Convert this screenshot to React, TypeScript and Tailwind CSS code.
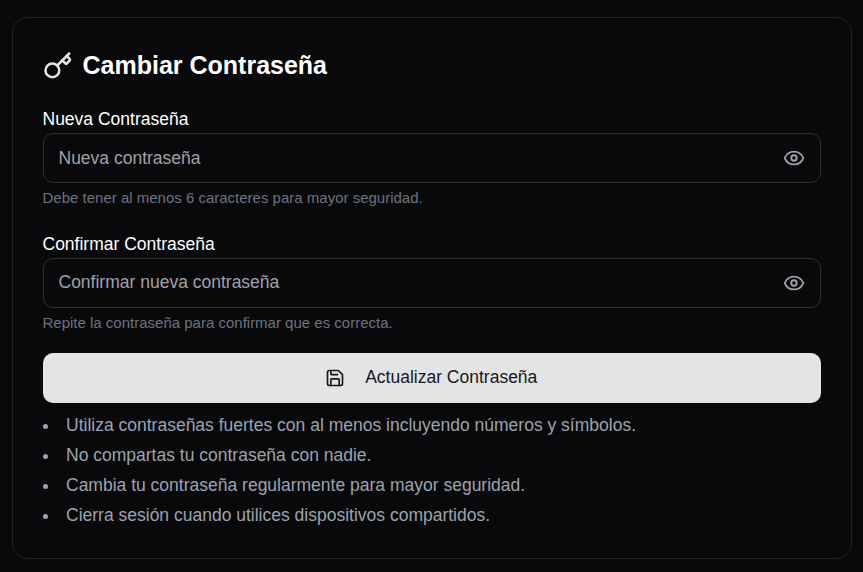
import { useState } from "react";
import { Eye, Key, Save } from "lucide-react";

type FieldProps = { label: string; placeholder: string; hint: string; inputClass?: string };

function Field({ label, placeholder, hint, inputClass = "" }: FieldProps) {
  const [value, setValue] = useState("");
  return (
    <div className="flex flex-col">
      <label className="-ml-[0.5px] h-[23px] text-[17.5px] leading-[19px] text-white">{label}</label>
      <div className="flex h-[50px] items-center rounded-[10px] border border-[#2e2e31] pl-[14.5px] pr-[15px]">
        <input
          className={`min-w-0 flex-1 bg-transparent text-[17.5px] text-white outline-none placeholder:text-[#a1a1aa] ${inputClass}`}
          placeholder={placeholder}
          value={value}
          onChange={(e) => setValue(e.target.value)}
        />
        <Eye size={22} className="text-[#a1a1aa]" />
      </div>
      <p className="-ml-[0.5px] mt-1 h-[22px] text-[15px] leading-[22px] text-[#6b7280]">{hint}</p>
    </div>
  );
}

const tips = [
  "Utiliza contraseñas fuertes con al menos incluyendo números y símbolos.",
  "No compartas tu contraseña con nadie.",
  "Cambia tu contraseña regularmente para mayor seguridad.",
  "Cierra sesión cuando utilices dispositivos compartidos.",
];

export default function App() {
  return (
    <div className="h-[572px] w-[863px] bg-[#09090b] pl-3 pt-[17px] font-['Liberation_Sans',Arial,sans-serif]">
      <div className="h-[542px] w-[840px] rounded-[15px] border border-[#232326] px-[30px] pt-[32px]">
        <h2 className="flex h-[32px] items-center gap-[9.5px] text-[25px] font-bold text-white">
          <Key size={30} className="shrink-0 text-[#e4e4e7]" />
          <span>Cambiar Contraseña</span>
        </h2>
        <div className="mt-[28px] flex flex-col gap-[26px]">
          <Field
            label="Nueva Contraseña"
            placeholder="Nueva contraseña"
            hint="Debe tener al menos 6 caracteres para mayor seguridad."
          />
          <Field
            label="Confirmar Contraseña"
            placeholder="Confirmar nueva contraseña"
            hint="Repite la contraseña para confirmar que es correcta."
            inputClass="pb-0.5"
          />
        </div>
        <button className="mt-[19px] flex h-[50px] w-full items-center justify-center gap-[20px] rounded-[10px] bg-[#e4e4e7] pr-[1.5px] text-[17.5px] text-[#18181b]">
          <Save size={20} />
          <span className="pb-0.5">Actualizar Contraseña</span>
        </button>
        <ul className="mt-[7px] text-[17.5px] leading-[30px] text-[#9ca3af]">
          {tips.map((tip) => (
            <li key={tip} className="flex items-center">
              <span className="mr-[18px] mt-0.5 size-[5px] rounded-full bg-[#9ca3af]" />
              {tip}
            </li>
          ))}
        </ul>
      </div>
    </div>
  );
}
